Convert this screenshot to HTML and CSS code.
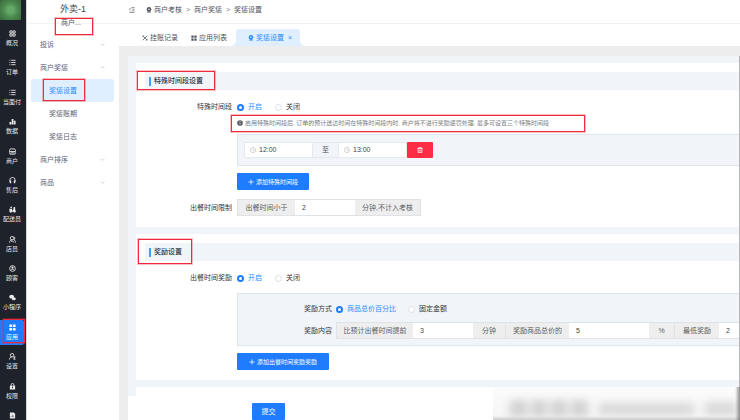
FILE: index.html
```html
<!DOCTYPE html>
<html lang="zh-CN">
<head>
<meta charset="utf-8">
<title>奖惩设置</title>
<link rel="stylesheet" href="styles.css">
</head>
<body>
<div class="app">
  <aside class="rail">
    <div class="logo"></div>
    <nav class="rail-nav">
      <a href="#"><svg viewBox="0 0 16 16"><path d="M2 2h5v5H2zM9 2h5v5H9zM2 9h5v5H2zM9 9h5v5H9z"/></svg>概况</a>
      <a href="#"><svg viewBox="0 0 16 16"><path d="M5 3h10M5 8h10M5 13h10M1 3h2M1 8h2M1 13h2"/></svg>订单</a>
      <a href="#"><svg viewBox="0 0 16 16"><path d="M5 3h10M5 8h10M5 13h10M1 3h2M1 8h2M1 13h2"/></svg>当面付</a>
      <a href="#"><svg viewBox="0 0 16 16"><path class="solid" d="M1 9h4v6H1zM6 2h4v13H6zM11 6h4v9h-4z"/></svg>数据</a>
      <a href="#"><svg viewBox="0 0 16 16"><path d="M3 2h10l2 4v2H1V6zM2 8v6h12V8M5 11h6"/></svg>商户</a>
      <a href="#"><svg viewBox="0 0 16 16"><path d="M2 10V7a6 6 0 0 1 12 0v3"/><path class="solid" d="M1 8h4v6H2zM11 8h4l-1 6h-3z"/></svg>售后</a>
      <a href="#"><svg viewBox="0 0 16 16"><path class="solid" d="M1 6h6v4h2l2-8h3v6l2 4-2 3h-3l-1-2H7l-1 2H2l-1-3z"/><circle class="solid" cx="5" cy="3" r="2"/></svg>配送员</a>
      <a href="#"><svg viewBox="0 0 16 16"><circle cx="7" cy="5" r="4"/><path d="M1 15c0-4 3-6 6-6M11 2c3 1 3 5 0 7 3 1 4 3 4 6M5 14l3-3 3 4"/></svg>店员</a>
      <a href="#"><svg viewBox="0 0 16 16"><circle cx="8" cy="8" r="6.5"/><circle class="solid" cx="8" cy="6" r="2.5"/><path d="M4 12c2-3 6-3 8 0"/></svg>顾客</a>
      <a href="#"><svg viewBox="0 0 16 16"><ellipse class="solid" cx="6" cy="6" rx="5.5" ry="4.5"/><ellipse class="solid" cx="11" cy="11" rx="4.5" ry="3.5"/></svg>小程序</a>
      <a href="#" class="on"><svg viewBox="0 0 16 16"><path class="solid" d="M1 1h6v6H1zM9 1h6v6H9zM1 9h6v6H1zM9 9h6v6H9z"/></svg>应用</a>
      <a href="#"><svg viewBox="0 0 16 16"><circle cx="7" cy="5" r="4"/><path d="M1 15c0-4 3-6 6-6M10 9h5M10 14h5M12 9v5"/></svg>设置</a>
      <a href="#"><svg viewBox="0 0 16 16"><path d="M5 7V4a3 3 0 0 1 6 0v3"/><path class="solid" fill-rule="evenodd" d="M2 6h12v9H2zM7 8v4h2V8z"/></svg>权限</a>
      <a href="#"><svg viewBox="0 0 16 16"><path class="solid" fill-rule="evenodd" d="M2 1h9l3 3v11H2zM4 12h1V9H4zM7 12h1V6H7zM10 12h1V8h-1z"/></svg></a>
    </nav>
  </aside>

  <aside class="side">
    <h1>外卖-1</h1>
    <div class="peek"><span>商户...</span></div>
    <nav class="menu">
      <a href="#">投诉<svg viewBox="0 0 10 6"><path d="M1 1l4 4 4-4"/></svg></a>
      <a href="#">商户奖惩<svg viewBox="0 0 10 6"><path d="M1 5l4-4 4 4"/></svg></a>
      <a href="#" class="sub on">奖惩设置</a>
      <a href="#" class="sub">奖惩账期</a>
      <a href="#" class="sub">奖惩日志</a>
      <a href="#">商户排序<svg viewBox="0 0 10 6"><path d="M1 1l4 4 4-4"/></svg></a>
      <a href="#">商品<svg viewBox="0 0 10 6"><path d="M1 1l4 4 4-4"/></svg></a>
    </nav>
  </aside>

  <main class="main">
    <header class="crumbs">
      <svg class="fold" viewBox="0 0 16 16"><path d="M6 2h9M8 8h7M1 14h14M4 3L1 6l3 3"/></svg>
      <svg class="ic" viewBox="0 0 16 16"><circle class="solid" cx="8" cy="6" r="6"/><circle class="dot" cx="8" cy="6" r="2"/><path class="solid" d="M4 11h8v5l-4-2-4 2z"/></svg>
      <span>商户考核</span><i>&gt;</i><span>商户奖惩</span><i>&gt;</i><span>奖惩设置</span>
    </header>
    <nav class="tabs">
      <a href="#"><svg class="ic" viewBox="0 0 16 16"><path d="M2 2l12 12M14 2L2 14M1 5l4-4M11 15l4-4"/></svg>挂账记录</a>
      <a href="#"><svg class="ic" viewBox="0 0 16 16"><path class="solid" d="M1 1h6v6H1zM9 1h6v6H9zM1 9h6v6H1zM9 9h6v6H9z"/></svg>应用列表</a>
      <a href="#" class="on"><svg class="ic" viewBox="0 0 16 16"><circle class="solid" cx="8" cy="6" r="6"/><circle class="dot" cx="8" cy="6" r="2"/><path class="solid" d="M4 11h8v5l-4-2-4 2z"/></svg>奖惩设置<b>×</b></a>
    </nav>

    <form class="page">
      <div class="scroll">
        <section class="card">
          <h2>特殊时间段设置</h2>
          <div class="row choice">
            <span class="label">特殊时间段</span>
            <div class="radios">
              <label><input type="radio" name="period" checked>开启</label>
              <label><input type="radio" name="period">关闭</label>
            </div>
          </div>
          <div class="body">
            <p class="hint"><svg viewBox="0 0 16 16"><circle class="solid" cx="8" cy="8" r="7.5"/><path class="mark" d="M8 7v5M8 3v2"/></svg>启用特殊时间段后, 订单的预计送达时间在特殊时间段内时, 商户将不进行奖励惩罚处理. 最多可设置三个特殊时间段</p>
            <div class="panel times">
              <label class="time"><svg viewBox="0 0 16 16"><circle cx="8" cy="8" r="7"/><path d="M8 4v5h4"/></svg><input type="text" value="12:00" aria-label="开始时间"></label>
              <span class="to">至</span>
              <label class="time"><svg viewBox="0 0 16 16"><circle cx="8" cy="8" r="7"/><path d="M8 4v5h4"/></svg><input type="text" value="13:00" aria-label="结束时间"></label>
              <button type="button" class="del" aria-label="删除"><svg viewBox="0 0 16 16"><path d="M1 4h14M5 4V1h6v3M3 4v11h10V4M6 7v5M10 7v5"/></svg></button>
            </div>
            <button type="button" class="btn add"><svg viewBox="0 0 16 16"><path d="M8 1v14M1 8h14"/></svg>添加特殊时间段</button>
          </div>
          <div class="row limit">
            <label class="label" for="limit">出餐时间限制</label>
            <div class="group">
              <span class="w57">出餐时间小于</span><input id="limit" class="w60" type="text" value="2"><span class="w65">分钟,不计入考核</span>
            </div>
          </div>
        </section>

        <section class="card">
          <h2>奖励设置</h2>
          <div class="row choice">
            <span class="label">出餐时间奖励</span>
            <div class="radios">
              <label><input type="radio" name="reward" checked>开启</label>
              <label><input type="radio" name="reward">关闭</label>
            </div>
          </div>
          <div class="body">
            <div class="panel rules">
              <div class="row">
                <span class="label">奖励方式</span>
                <div class="radios">
                  <label><input type="radio" name="mode" checked>商品总价百分比</label>
                  <label><input type="radio" name="mode">固定金额</label>
                </div>
              </div>
              <div class="row">
                <label class="label" for="early">奖励内容</label>
                <div class="group">
                  <span class="w76">比预计出餐时间提前</span><input id="early" class="w60" type="text" value="3"><span class="w32">分钟</span><span class="w64">奖励商品总价的</span><input class="w80" type="text" value="5" aria-label="百分比"><span class="w25">%</span><span class="w45">最低奖励</span><input class="w60" type="text" value="2" aria-label="最低奖励">
                </div>
              </div>
            </div>
            <button type="button" class="btn add wide"><svg viewBox="0 0 16 16"><path d="M8 1v14M1 8h14"/></svg>添加出餐时间奖励奖励</button>
          </div>
        </section>
        <section class="card"></section>
      </div>
      <footer><button type="submit" class="btn submit">提交</button></footer>
    </form>
  </main>

  <svg class="haze" viewBox="0 0 247 33" preserveAspectRatio="none" aria-hidden="true">
    <defs>
      <filter id="soft" x="-20%" y="-50%" width="140%" height="200%"><feGaussianBlur stdDeviation="4"/></filter>
      <linearGradient id="foot" x1="0" y1="0" x2="0" y2="1"><stop offset="0" stop-color="#fcfcfc"/><stop offset=".88" stop-color="#f5f5f5"/><stop offset="1" stop-color="#c8c8c8"/></linearGradient>
      <linearGradient id="edge"><stop offset="0" stop-color="#888" stop-opacity="0"/><stop offset="1" stop-color="#777" stop-opacity=".85"/></linearGradient>
    </defs>
    <rect width="247" height="33" fill="url(#foot)"/>
    <g fill="#d2d2d2" filter="url(#soft)">
      <rect x="17" y="13" width="17" height="17"/><rect x="38" y="13" width="16" height="17"/><rect x="58" y="13" width="16" height="17"/><rect x="78" y="13" width="17" height="17"/>
      <rect x="106" y="16" width="95" height="12" opacity=".8"/><rect x="212" y="15" width="32" height="13" opacity=".8"/>
    </g>
    <rect x="242" width="5" height="33" fill="url(#edge)"/>
  </svg>

  <div class="box box-menu"></div>
  <div class="box box-item"></div>
  <div class="box box-app"></div>
  <div class="box box-period"></div>
  <div class="box box-hint"></div>
  <div class="box box-reward"></div>
</div>
</body>
</html>
```
FILE: styles.css
```css
* { box-sizing: border-box; }
body {
  margin: 0;
  font: 7px/10px "Liberation Sans", "Noto Sans CJK SC", sans-serif;
  color: #50545c;
  background: #fff;
}
h1, h2, p { margin: 0; font-weight: 400; }
a { color: inherit; text-decoration: none; }
input, button { font: inherit; color: inherit; margin: 0; }
svg { fill: none; stroke: currentColor; stroke-width: 2; flex: none; }
.solid { fill: currentColor; stroke: none; }
.app { position: relative; display: flex; height: 100vh; overflow: hidden; }

/* icon rail */
.rail { flex: none; width: 26px; display: flex; flex-direction: column; background: #1e222a; color: #e9eaec; }
.logo { flex: none; width: 21px; height: 20px; margin-bottom: 6px; background: radial-gradient(circle at 50% 50%, #66a86a 0 20%, #4c8b50 50%, #3a693c 100%); }
.rail-nav { flex: 1; display: flex; flex-direction: column; justify-content: space-between; margin-bottom: -13px; }
.rail-nav a { flex: none; display: flex; flex-direction: column; align-items: center; height: 25px; width: 24px; padding-top: 4px; font-size: 6px; line-height: 10px; white-space: nowrap; border-radius: 0 2px 2px 0; }
.rail-nav svg { width: 7px; height: 7px; margin-bottom: 1px; }
.rail-nav .on { background: #1f7cff; color: #fff; }

/* menu */
.side { flex: none; width: 93px; background: #fff; border-left: 1px solid #d9dadd; }
.side h1 { height: 19px; font-size: 9px; line-height: 19px; text-align: center; color: #444; }
.peek { position: relative; height: 14px; text-align: center; line-height: 8px; }
.peek::before { content: ""; position: absolute; inset: 4px 0 auto; border-top: 1px solid #f3f3f3; }
.peek span { position: relative; margin-right: 4px; }
.menu { padding: 0 5px 0 4px; color: #5b6270; }
.menu a { display: flex; align-items: center; justify-content: space-between; height: 23px; padding: 0 9px; border-radius: 2px; }
.menu svg { width: 5px; height: 3px; color: #a9adb5; stroke-width: 1; }
.menu .sub { padding-left: 18px; }
.menu .on { background: #e0efff; color: #2b8bff; }

/* top bars */
.main { flex: 1; min-width: 0; display: flex; flex-direction: column; background: #ededed; }
.crumbs { flex: none; display: flex; align-items: center; height: 24px; padding: 0 10px 4px; background: #fff; border-bottom: 1px solid #f0f0f0; }
.fold { width: 6px; height: 6px; margin-right: 11px; }
.ic { width: 6px; height: 6px; margin-right: 2px; }
.dot { fill: #fff; stroke: none; }
.crumbs i { width: 12px; text-align: center; font-style: normal; color: #777; }
.tabs { flex: none; display: flex; align-items: flex-end; gap: 13px; height: 22px; padding-left: 23px; background: #fff; }
.tabs a { display: flex; align-items: center; height: 17px; }
.tabs .on { position: relative; width: 64px; margin-left: -4px; padding-left: 12px; background: #e0efff; color: #2b8bff; border-radius: 3px 3px 0 0; }
.tabs .on::before, .tabs .on::after { content: ""; position: absolute; bottom: 0; width: 3px; height: 4px; }
.tabs .on::before { right: 100%; background: linear-gradient(to bottom right, transparent 50%, #e0efff 50%); }
.tabs .on::after { left: 100%; background: linear-gradient(to bottom left, transparent 50%, #e0efff 50%); }
.tabs b { margin-left: 4px; font-weight: 400; }

/* content */
.page { flex: 1; min-height: 0; display: flex; flex-direction: column; margin: 10px 0 0 9px; background: #f1f5fa; border-right: 1px solid #b4b6b9; }
.scroll { flex: 1; min-height: 0; overflow: hidden; display: flex; flex-direction: column; gap: 7px; padding: 7px 0 0 8px; }
.card { flex: none; min-height: 40px; padding: 9px 0 10px; background: #fff; }
.card h2 { display: flex; align-items: center; height: 18px; margin: 0 0 10px 9px; padding-left: 4px; background: #f1f4f9; color: #2c3340; font-size: 7px; font-weight: 500; }
.card h2::before { content: ""; width: 2px; height: 9px; margin-right: 3px; background: #409eff; }
.row { display: flex; align-items: center; gap: 5px; }
.label { flex: none; width: 96px; text-align: right; white-space: nowrap; color: #33363b; }
.choice { height: 14px; }
.body { margin-left: 101px; }
.radios { display: flex; gap: 13px; }
.radios label { display: flex; align-items: center; gap: 4px; white-space: nowrap; color: #33363b; }
.radios label:has(:checked) { color: #2b8bff; }
.radios input { appearance: none; width: 7px; height: 7px; border: 1px solid #d9dce2; border-radius: 50%; background: #fff; }
.radios input:checked { border: 2px solid #1f7cff; }
.hint { display: flex; align-items: center; height: 13px; margin: 2px 0 5px; font-size: 6px; color: #777b82; white-space: nowrap; }
.hint svg { width: 6px; height: 6px; margin-right: 2px; color: #555a63; }
.mark { stroke: #fff; }
.panel { border: 1px solid #dfe4ea; border-right: 0; background: #f1f4f9; }
.times { display: flex; padding: 7px 6px; height: 32px; }
.time { display: flex; align-items: center; width: 69px; padding-left: 5px; background: #fff; border: 1px solid #e6e9ee; }
.time svg { width: 6px; height: 6px; margin-right: 3px; stroke-width: 1; color: #8f949d; }
.time input { width: 40px; padding: 0; border: 0; background: none; outline: 0; color: #444; }
.to { width: 25px; line-height: 14px; text-align: center; border: solid #e6e9ee; border-width: 1px 0; }
.del { display: flex; align-items: center; justify-content: center; width: 26px; padding: 0; border: 0; border-radius: 1px; background: #fc2d45; color: #fff; }
.del svg { width: 6px; height: 6px; }
.btn { display: flex; align-items: center; justify-content: center; height: 17px; padding: 0; border: 0; border-radius: 1px; background: #1f7cff; color: #fff; white-space: nowrap; }
.add { width: 72px; margin-top: 7px; font-size: 6px; }
.add svg { width: 6px; height: 6px; margin-right: 2px; }
.wide { width: 92px; }
.limit { margin: 9px 0 1px; }
.group { display: flex; height: 17px; border: 1px solid #e0e2e6; }
.group span { flex: none; line-height: 16px; text-align: center; white-space: nowrap; background: #eee; color: #5c5f64; }
.group span + span { border-left: 1px solid #e0e2e6; }
.group input { flex: none; padding: 0 7px; border: 0; border-radius: 0; background: #fff; color: #444; outline: 0; }
.w25 { width: 25px; }
.w32 { width: 32px; }
.w45 { width: 45px; }
.w57 { width: 57px; }
.w60 { width: 60px; }
.w64 { width: 64px; }
.w65 { width: 65px; }
.w76 { width: 76px; }
.w80 { width: 80px; }
.rules { display: flex; flex-direction: column; gap: 6px; margin-top: 8px; padding: 8px 0 6px; overflow: hidden; }
.rules .row { min-height: 14px; gap: 4px; }
.rules .label { width: 94px; }
.rules .radios { gap: 12px; }
footer { flex: none; height: 24px; padding: 7px 0 0 124px; background: #fff; }
.submit { width: 33px; }

/* overlays */
.haze { position: absolute; right: 0; bottom: 0; width: 247px; height: 33px; stroke: none; }
.box { position: absolute; border: 1px solid #f02a3a; box-shadow: 0 0 0 1px rgba(240, 42, 58, .3); pointer-events: none; }
.box-menu { left: 55px; top: 18px; width: 38px; height: 17px; }
.box-item { left: 43px; top: 79px; width: 42px; height: 22px; }
.box-app { left: 3px; top: 319px; width: 22px; height: 24px; }
.box-period { left: 137px; top: 71px; width: 78px; height: 19px; }
.box-hint { left: 231px; top: 115px; width: 354px; height: 17px; }
.box-reward { left: 138px; top: 239px; width: 54px; height: 25px; }
```
